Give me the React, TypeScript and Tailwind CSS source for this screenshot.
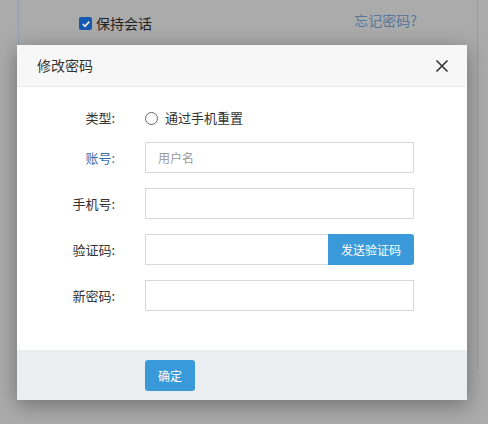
import React from "react";

const FONT = { fontFamily: '"Microsoft YaHei", "Noto Sans CJK SC", "Liberation Sans", sans-serif' };

function Row({ label, labelClass, children }: { label: string; labelClass?: string; children: React.ReactNode }) {
  return (
    <div className="flex items-center h-[31px]">
      <div className={`w-[98px] text-right text-[13px] ${labelClass || "text-[#333]"}`}>{label}</div>
      <div className="ml-[30px] flex">{children}</div>
    </div>
  );
}

export default function App() {
  return (
    <div className="relative w-[488px] h-[424px] overflow-hidden bg-[#ababab]" style={FONT}>
      {/* page behind the overlay */}
      <div className="ml-[18px] w-[460px] h-[370px] border-l border-r border-l-[#92a0ae] border-r-[#9a9a9a]">
        <div className="flex items-start justify-between pt-[13px] pl-[60px] pr-[60px]">
          <label className="flex items-center gap-[4px] text-[14px] text-[#222]">
            <span className="w-[13px] h-[13px] rounded-[2px] bg-[#1558b0] flex items-center justify-center">
              <svg width="10" height="10" viewBox="0 0 10 10">
                <path d="M1.8 5.2 L4 7.3 L8.3 2.6" stroke="#e6e6e6" strokeWidth="1.8" fill="none" />
              </svg>
            </span>
            保持会话
          </label>
          <span className="text-[14px] text-[#56789a] -mt-[3px]">忘记密码?</span>
        </div>
      </div>

      {/* modal */}
      <div className="absolute left-[17px] top-[45px] w-[450px] bg-white shadow-[0_5px_20px_rgba(0,0,0,0.35)]">
        <div className="h-[42px] bg-[#f7f7f7] border-b border-[#e8e8e8] flex items-center justify-between pl-[20px] pr-[18px]">
          <span className="text-[14px] text-[#333]">修改密码</span>
          <svg width="14" height="14" viewBox="0 0 14 14">
            <path d="M1.5 1.5 L12.5 12.5 M12.5 1.5 L1.5 12.5" stroke="#333" strokeWidth="1.6" />
          </svg>
        </div>

        <div className="pt-[18px] pb-[39px] flex flex-col">
          <div className="flex items-center h-[26px] mb-[11px]">
            <div className="w-[98px] text-right text-[13px] text-[#333]">类型:</div>
            <label className="ml-[30px] flex items-center gap-[7px] text-[13px] text-[#333]">
              <span className="w-[13px] h-[13px] rounded-full border border-[#666] bg-white" />
              通过手机重置
            </label>
          </div>
          <div className="flex flex-col gap-[15px]">
            <Row label="账号:" labelClass="text-[#3a6ea8]">
              <input
                placeholder="用户名"
                className="w-[269px] h-[31px] border border-[#d6d6de] px-[12px] text-[12px] outline-none placeholder:text-[#999]"
              />
            </Row>
            <Row label="手机号:">
              <input className="w-[269px] h-[31px] border border-[#d6d6de] px-[12px] text-[12px] outline-none" />
            </Row>
            <Row label="验证码:">
              <input className="w-[183px] h-[31px] border border-[#d6d6de] border-r-0 px-[12px] text-[12px] outline-none" />
              <button className="w-[86px] h-[31px] bg-[#3a9ad9] text-white text-[12px] rounded-r-[3px]">发送验证码</button>
            </Row>
            <Row label="新密码:">
              <input type="password" className="w-[269px] h-[31px] border border-[#d6d6de] px-[12px] text-[12px] outline-none" />
            </Row>
          </div>
        </div>

        <div className="h-[50px] bg-[#ebeef0] pt-[10px] pl-[128px]">
          <button className="w-[50px] h-[31px] rounded-[3px] bg-[#3a9ad9] text-white text-[12px]">确定</button>
        </div>
      </div>
    </div>
  );
}
